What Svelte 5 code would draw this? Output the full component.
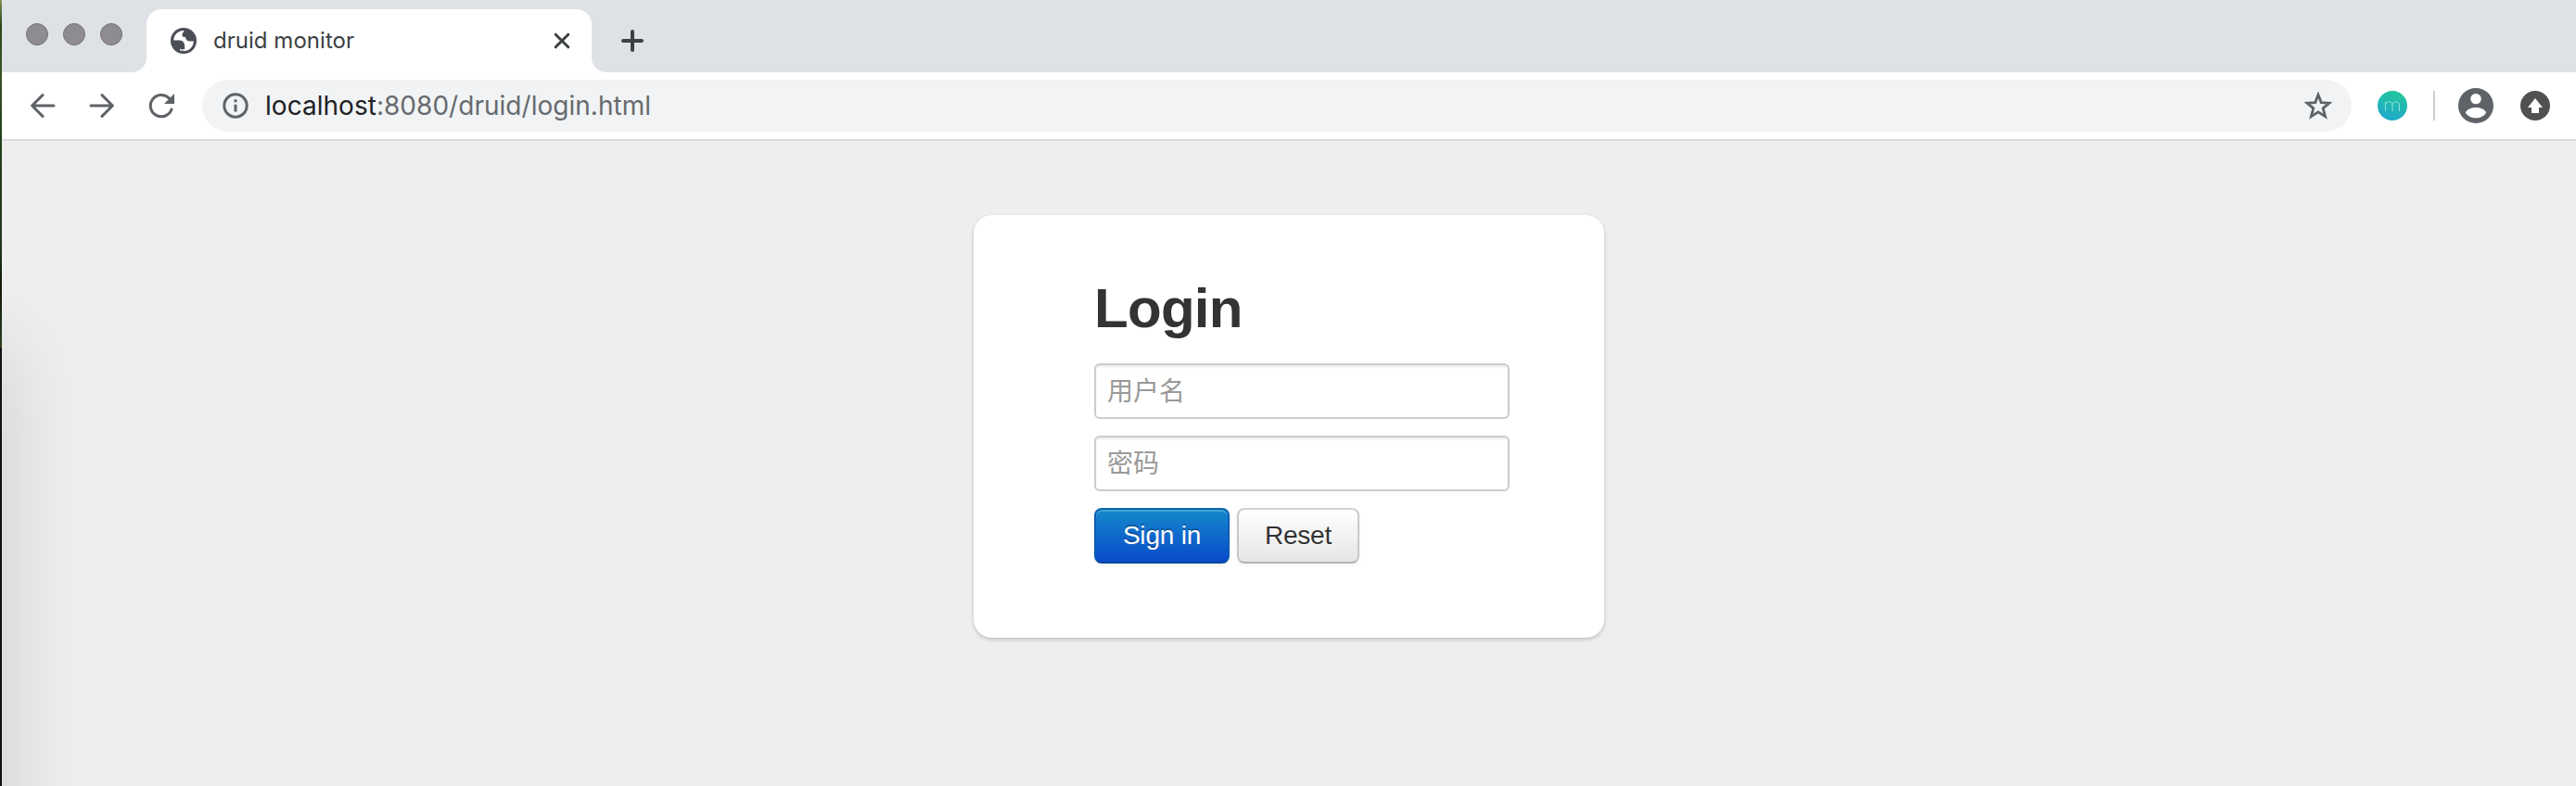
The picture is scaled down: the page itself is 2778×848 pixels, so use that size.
<script>
  const user = '用户名';
  const pass = '密码';
</script>

<div class="desktop">
  <div class="edge"><i class="grass"></i><i class="dark"></i></div>
  <div class="window">
    <header class="strip">
      <div class="lights"><i></i><i></i><i></i></div>
      <div class="tab">
        <svg class="globe" width="28" height="28" viewBox="0 0 28 28">
          <circle cx="14" cy="14" r="14" fill="#4b4f55" />
          <path fill="#fff" d="M3.2 13.6C3.4 7.6 8.2 3 14.6 3.1C14.2 5 12.8 5.4 12.4 7.2C12.2 9.2 13.4 10 16 10.1C16.4 13 17.6 14.4 20.4 14.4H24.8C24.6 20.4 20 24.9 14.6 24.9C10.4 24.9 10 24.9 10 24.6V20.4H15.2C15.2 16.4 13.4 13.8 9.8 13.6Z" />
          <path fill="#4b4f55" d="M9.600 20H15.2V23.200H10.400Z" />
        </svg>
        <span class="title">druid monitor</span>
        <svg class="close" width="18" height="18" viewBox="0 0 18 18"><path d="M2.2 2.2L15.8 15.8M15.8 2.2L2.2 15.8" /></svg>
      </div>
      <svg class="plus" width="24" height="24" viewBox="0 0 24 24"><path d="M12 2V22M2 12H22" /></svg>
    </header>
    <nav class="toolbar">
      <svg class="nav back" width="28" height="28" viewBox="0 0 28 28"><path d="M26 14H2.8M14 2.6L2.6 14L14 25.4" /></svg>
      <svg class="nav fwd" width="28" height="28" viewBox="0 0 28 28"><path d="M2 14H25.2M14 2.6L25.4 14L14 25.4" /></svg>
      <svg class="nav reload" width="28" height="28" viewBox="0 0 28 28"><path d="M22.3 5.9A11.7 11.7 0 1 0 25 18" /><path class="fill" d="M28 1V12H17Z" /></svg>
      <div class="address">
        <svg class="info" width="28" height="28" viewBox="0 0 28 28"><circle cx="14" cy="14" r="12.2" /><path d="M14 7.2V10.2M14 12.8V20.4" /></svg>
        <span class="url">localhost<em>:8080/druid/login.html</em></span>
        <svg class="star" width="30" height="30" viewBox="0 0 30 30"><path d="M15 3.2L18.2 11.6L27 12.2L20.2 17.8L22.6 26.6L15 21.9L7.4 26.6L9.8 17.8L3 12.2L11.8 11.6Z" /></svg>
      </div>
      <svg class="ext" width="32" height="32" viewBox="0 0 32 32">
        <defs><linearGradient id="teal" x1="0.65" y1="0" x2="0.35" y2="1"><stop offset="0" stop-color="#22c69c" /><stop offset="1" stop-color="#1fa8cc" /></linearGradient></defs>
        <circle cx="16" cy="16" r="16" fill="url(#teal)" />
        <path d="M8.5 22V12M8.5 15Q9 11.7 12.3 11.7T16 15V22M16 15Q16.5 11.7 19.8 11.7T23.5 15V22" fill="none" stroke="#8fe0db" stroke-width="1" />
      </svg>
      <i class="rule"></i>
      <svg class="avatar" width="38" height="38" viewBox="0 0 38 38"><circle cx="19" cy="19" r="19" fill="#5f6368" /><circle cx="19" cy="11.6" r="5.7" fill="#fff" /><path fill="#fff" d="M7.8 26.5C9.5 22.7 14.5 21 19 21S28.500 22.700 30.200 26.500C28 30.200 24 32.300 19 32.300S10 30.200 7.800 26.500Z" /></svg>
      <svg class="update" width="32" height="32" viewBox="0 0 32 32"><circle cx="16" cy="16" r="16" fill="#505050" /><path fill="#fff" d="M16 8L24 18H20V24H12V18H8Z" /></svg>
    </nav>
    <main>
      <form class="card">
        <h2>Login</h2>
        <input type="text" placeholder={user} />
        <input type="password" placeholder={pass} />
        <div class="actions">
          <button type="button" class="primary">Sign in</button>
          <button type="button">Reset</button>
        </div>
      </form>
      <div class="shade"></div>
    </main>
  </div>
</div>

<style>
  :global(body) { margin: 0; overflow: hidden; }
  * { box-sizing: border-box; }
  svg { display: block; flex: none; }
  .desktop { display: flex; width: 2778px; height: 848px; overflow: hidden; background: #eee; }
  .edge { width: 2px; flex: none; display: flex; flex-direction: column; }
  .grass { height: 375px; background: linear-gradient(#7d9159 0, #2c4513 28px, #3a5424 70px, #23401b 150px, #20351a 270px, #101808 310px, #2c3f20 375px); }
  .dark { flex: 1; background: #111214; }
  .window { flex: 1; display: flex; flex-direction: column; min-width: 0; }
  .strip { height: 78px; flex: none; background: #dee1e6; display: flex; align-items: flex-start; border-top-left-radius: 4px; }
  .lights { display: flex; gap: 16px; width: 156px; padding: 25px 0 0 26px; }
  .lights i { width: 24px; height: 24px; border-radius: 50%; background: #8e8c90; border: 1px solid #727175; }
  .tab { position: relative; width: 480px; height: 68px; margin-top: 10px; padding: 0 23px 0 26px; display: flex; align-items: center; background: #fff; border-radius: 16px 16px 0 0; }
  .tab::before, .tab::after { content: ''; position: absolute; bottom: 0; width: 16px; height: 16px; }
  .tab::before { right: 100%; background: radial-gradient(circle at 0 0, transparent 15.5px, #fff 16.5px); }
  .tab::after { left: 100%; background: radial-gradient(circle at 100% 0, transparent 15.5px, #fff 16.5px); }
  .title { margin-left: 18px; flex: 1; font: 24px/34px Inter, sans-serif; letter-spacing: 0.03px; color: #3c4043; white-space: nowrap; }
  .close, .plus { fill: none; stroke: #3c4043; stroke-width: 3; stroke-linecap: round; }
  .plus { margin: 32px 0 0 32px; stroke-width: 4; }
  .toolbar { height: 74px; flex: none; background: #fff; border-bottom: 2px solid #dadce0; display: flex; align-items: center; padding: 0 28px 0 30px; }
  .nav { fill: none; stroke: #5f6368; stroke-width: 3; stroke-linecap: round; stroke-linejoin: round; }
  .fwd { margin-left: 36px; }
  .reload { margin-left: 36px; }
  .nav .fill { fill: #5f6368; stroke: none; }
  .address { flex: 1; height: 56px; margin-left: 30px; border-radius: 28px; background: #f1f3f4; display: flex; align-items: center; padding: 0 21px 0 22px; }
  .info { fill: none; stroke: #5f6368; stroke-width: 3; }
  .url { margin-left: 18px; flex: 1; font: 28px/40px Inter, sans-serif; letter-spacing: 0.03px; color: #202124; white-space: nowrap; }
  .url em { font-style: normal; color: #666a6e; }
  .star { fill: none; stroke: #5f6368; stroke-width: 2.8; }
  .ext { margin-left: 28px; }
  .rule { width: 2px; height: 32px; background: #ccc; margin: 0 25px 0 28px; }
  .update { margin-left: 29px; }
  main { position: relative; flex: 1; overflow: hidden; background: #eee; padding: 80px 0 0 1048px; }
  .card { width: 680px; height: 456px; background: #fff; border-radius: 20px; box-shadow: 0 2px 4px rgba(0, 0, 0, 0.2); padding: 61px 102px 0 130px; display: flex; flex-direction: column; }
  h2 { margin: 0 0 19px; font: bold 60px/80px 'Liberation Sans', sans-serif; letter-spacing: -0.7px; color: #333; }
  input { width: 448px; height: 60px; flex: none; margin: 0 0 18px; padding: 2px 12px 0; border: 2px solid #ccc; border-radius: 6px; background: #fff; box-shadow: inset 0 2px 2px rgba(0, 0, 0, 0.075); font: 28px/40px 'Liberation Sans', 'Noto Sans CJK SC', sans-serif; outline: 0; }
  input::placeholder { color: #999; opacity: 1; }
  .actions { display: flex; gap: 8px; }
  button { width: 132px; height: 60px; padding: 0; border: 2px solid; border-color: #d0d0d0 #c8c8c8 #b3b3b3; border-radius: 8px; background: linear-gradient(#fff, #e6e6e6); font: 28px/40px 'Liberation Sans', sans-serif; letter-spacing: -0.2px; color: #333; text-shadow: 0 2px 2px rgba(255, 255, 255, 0.75); box-shadow: inset 0 2px 0 rgba(255, 255, 255, 0.2), 0 2px 4px rgba(0, 0, 0, 0.05); }
  .primary { width: 146px; color: #fff; border-color: #0966ac #0a5cb8 #08489b; background: linear-gradient(#158bcb, #0a48cb) border-box; text-shadow: 0 -2px 0 rgba(0, 0, 0, 0.25); }
  .shade { position: absolute; left: -300px; top: 224px; width: 300px; height: 900px; box-shadow: 0 0 90px rgba(0, 0, 0, 0.14); }
</style>
